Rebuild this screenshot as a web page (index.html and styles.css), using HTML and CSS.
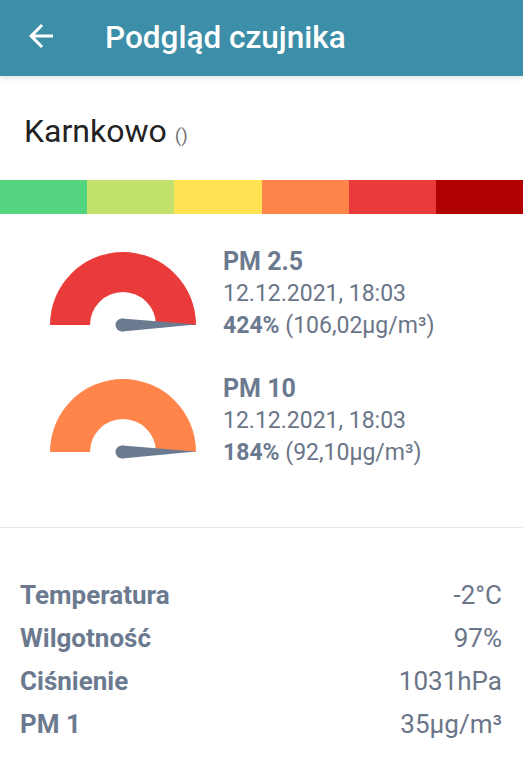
FILE: index.html
```html
<!doctype html>
<html>
  <head>
    <meta charset="utf-8">
    <link rel="stylesheet" href="styles.css">
  </head>
  <body>
    <div class="topbar">
      <svg class="back" viewBox="0 0 24 24" width="36" height="36">
        <path d="M20 11H7.83l5.59-5.59L12 4l-8 8 8 8 1.41-1.41L7.83 13H20v-2z" fill="#fff"/>
      </svg>
      <div class="title">Podgląd czujnika</div>
    </div>

    <div class="station">Karnkowo <span class="station-addr">()</span></div>

    <div class="scale">
      <div class="scale-step" style="background:#55d47f"></div>
      <div class="scale-step" style="background:#c3e26d"></div>
      <div class="scale-step" style="background:#ffe352"></div>
      <div class="scale-step" style="background:#ff854b"></div>
      <div class="scale-step" style="background:#ea3b3b"></div>
      <div class="scale-step" style="background:#b10000"></div>
    </div>

    <div class="gauges">
      <div class="gauge-row">
        <svg class="gauge" viewBox="0 0 146 81" width="146" height="81">
          <path d="M0 73A73 73 0 0 1 146 73L106 73A33 33 0 0 0 40 73Z" fill="#ea3b3b"/>
          <circle cx="72" cy="73" r="6.5" fill="#6b7a8f"/>
          <path d="M72 66.5L146 72.6L72 79.5Z" fill="#6b7a8f"/>
        </svg>
        <div class="reading">
          <div class="reading-name">PM 2.5</div>
          <div class="reading-date">12.12.2021, 18:03</div>
          <div class="reading-value"><b>424%</b> (106,02µg/m³)</div>
        </div>
      </div>
      <div class="gauge-row">
        <svg class="gauge" viewBox="0 0 146 81" width="146" height="81">
          <path d="M0 73A73 73 0 0 1 146 73L106 73A33 33 0 0 0 40 73Z" fill="#ff854b"/>
          <circle cx="72" cy="73" r="6.5" fill="#6b7a8f"/>
          <path d="M72 66.5L146 72.6L72 79.5Z" fill="#6b7a8f"/>
        </svg>
        <div class="reading">
          <div class="reading-name">PM 10</div>
          <div class="reading-date">12.12.2021, 18:03</div>
          <div class="reading-value"><b>184%</b> (92,10µg/m³)</div>
        </div>
      </div>
    </div>

    <div class="details">
      <div class="detail"><span class="detail-name">Temperatura</span><span class="detail-value">-2°C</span></div>
      <div class="detail"><span class="detail-name">Wilgotność</span><span class="detail-value">97%</span></div>
      <div class="detail"><span class="detail-name">Ciśnienie</span><span class="detail-value">1031hPa</span></div>
      <div class="detail"><span class="detail-name">PM 1</span><span class="detail-value">35µg/m³</span></div>
    </div>
  </body>
</html>
```

FILE: styles.css
```css
body {
  margin: 0;
  font-family: Roboto, "Noto Sans", sans-serif;
  background: #fff;
  color: #6b7588;
}

.topbar {
  height: 76px;
  background-color: #3d8ea8;
  display: flex;
  align-items: center;
  padding-left: 23px;
  box-shadow: 0 2px 5px rgba(0, 0, 0, 0.12);
}

.back {
  margin-top: -4px;
}

.title {
  color: white;
  font-size: 31.5px;
  font-weight: 500;
  margin-left: 46px;
  margin-top: -2px;
}

.station {
  height: 68px;
  box-sizing: border-box;
  padding: 36px 0 0 24px;
  font-size: 32px;
  line-height: 38px;
  color: #222;
}

.station-addr {
  font-size: 19px;
  color: #777;
}

.scale {
  display: flex;
  height: 34px;
  margin-top: 36px;
}

.scale-step {
  flex: 1;
}

.gauges {
  padding: 38px 0 0 50px;
  height: 314px;
  box-sizing: border-box;
  border-bottom: 1px solid #e6e6e6;
}

.gauge-row {
  display: flex;
  gap: 27px;
  height: 127px;
}

.reading {
  font-size: 23px;
  line-height: 32px;
  margin-top: -6px;
}

.reading-name {
  font-weight: bold;
  font-size: 25px;
  color: #6b7a8f;
}

.reading-value b {
  color: #6b7a8f;
}

.details {
  padding: 46px 21px 0 20px;
}

.detail {
  display: flex;
  justify-content: space-between;
  font-size: 26px;
  line-height: 43px;
}

.detail-name {
  font-weight: bold;
  color: #6b7a8f;
}
```
